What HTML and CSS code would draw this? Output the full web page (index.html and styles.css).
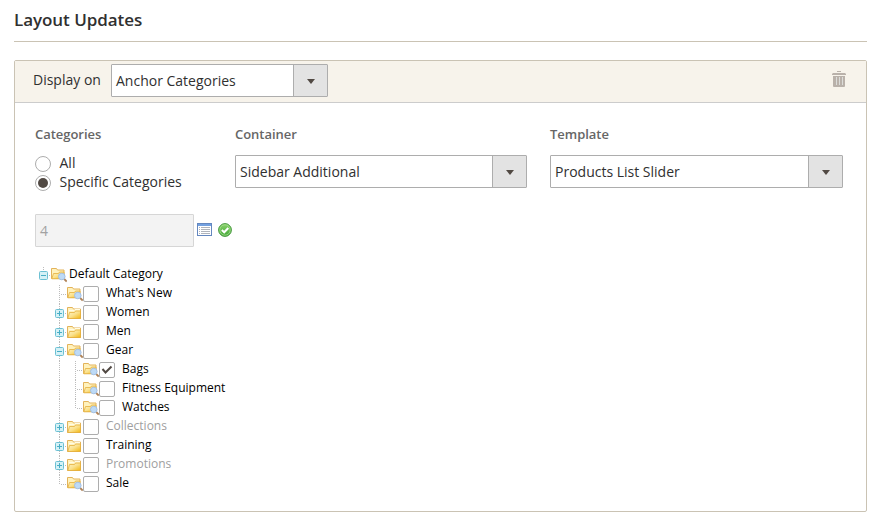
FILE: index.html
```
<!DOCTYPE html>
<html lang="en">
<head>
<meta charset="utf-8">
<title>Layout Updates</title>
<link rel="stylesheet" href="styles.css">
</head>
<body>
<svg class="defs" width="0" height="0" aria-hidden="true">
  <defs>
    <linearGradient id="gold" x1="0" y1="0" x2="1" y2="1"><stop offset="0" stop-color="#fff6c8"/><stop offset=".5" stop-color="#fae18d"/><stop offset="1" stop-color="#f2b60f"/></linearGradient>
    <linearGradient id="green" x1="0" y1="0" x2="0" y2="1"><stop offset="0" stop-color="#8bd36c"/><stop offset="1" stop-color="#3fa535"/></linearGradient>
    <symbol id="folder" viewBox="0 0 16 19">
      <path d="M.5 14.500V3.500h5l1 1.500h7v9.500z" fill="#fff2bd" stroke="#e3b35a"/>
      <path d="M2 6.500h5l1-1h5" fill="none" stroke="#fffbe5"/>
      <path d="M.8 14.500 2.500 8.500h5l1-1.500h5v7.500z" fill="url(#gold)" stroke="#e5ae3c" stroke-width=".8"/>
    </symbol>
    <symbol id="search-folder" viewBox="0 0 16 19">
      <path d="M.5 12.500V2.500h5l1 1.500h6.500v8.500z" fill="#fff2bd" stroke="#e3b35a"/>
      <path d="M.8 12.800 2.500 7.500h5l1-1.500h4.500v6.800z" fill="url(#gold)" stroke="#e5ae3c" stroke-width=".8"/>
      <path d="m13.200 13 2.500 2.500" stroke="#b08358" stroke-width="1.800"/>
      <circle cx="10.800" cy="10.500" r="3.300" fill="#bddaf6" stroke="#a3bfe2"/>
    </symbol>
    <symbol id="plus" viewBox="0 0 16 19">
      <path d="M8.500 0v19M14 9.500h2" fill="none" stroke="#bcbcbc" stroke-dasharray="1 1"/>
      <rect x="4.500" y="5.500" width="8" height="8" rx="1" fill="#d5f1f6" stroke="#6cc0d3"/>
      <path d="M6 9.500h5M8.500 7v5" stroke="#48aec6"/>
    </symbol>
    <symbol id="minus" viewBox="0 0 16 19">
      <path d="M8.500 0v19M14 9.500h2" fill="none" stroke="#bcbcbc" stroke-dasharray="1 1"/>
      <rect x="4.500" y="5.500" width="8" height="8" rx="1" fill="#d5f1f6" stroke="#6cc0d3"/>
      <path d="M6 9.500h5" stroke="#48aec6"/>
    </symbol>
    <symbol id="root" viewBox="0 0 16 19">
      <rect x="4.500" y="5.500" width="8" height="8" rx="1" fill="#d5f1f6" stroke="#6cc0d3"/>
      <path d="M6 9.500h5" stroke="#48aec6"/>
      <path d="M8.500 1v4M14 9.500h2" stroke="#bcbcbc" stroke-dasharray="1 1"/>
    </symbol>
    <symbol id="line" viewBox="0 0 16 19"><path d="M8.500 0v19" stroke="#bcbcbc" stroke-dasharray="1 1"/></symbol>
    <symbol id="tee" viewBox="0 0 16 19"><path d="M8.500 0v19M10 9.500h6" stroke="#bcbcbc" stroke-dasharray="1 1"/></symbol>
    <symbol id="elbow" viewBox="0 0 16 19"><path d="M8.500 0v10M10 9.500h6" stroke="#bcbcbc" stroke-dasharray="1 1"/></symbol>
  </defs>
</svg>
<h2 class="title">Layout Updates</h2>
<section class="panel">
  <header class="panel-head">
    <span class="display-label">Display on</span>
    <div class="select select-page"><span>Anchor Categories</span><i></i></div>
    <svg class="trash" width="14" height="17" viewBox="0 0 14 17"><path d="M5 0h4v1H5zM1 2h12l1 1v1H0V3zM1 5h12v10q0 1-1 1H2q-1 0-1-1z" fill="#b9b1aa"/><path d="M4.500 6v8M7.500 6v8M10.500 6v8" stroke="#dcdcd9"/></svg>
  </header>
  <div class="panel-body">
    <div class="fields">
      <div class="field">
        <h3>Categories</h3>
        <label class="choice"><span class="radio"></span>All</label>
        <label class="choice"><span class="radio on"></span>Specific Categories</label>
      </div>
      <div class="field"><h3>Container</h3><div class="select select-container"><span>Sidebar Additional</span><i></i></div></div>
      <div class="field"><h3>Template</h3><div class="select select-template"><span>Products List Slider</span><i></i></div></div>
    </div>
    <div class="chooser">
      <div class="ids">4</div>
      <svg class="list-icon" width="15" height="13" viewBox="0 0 15 13"><rect x=".5" y=".5" width="14" height="12" fill="#fff" stroke="#6487bf"/><path d="M1 1h13v2H1z" fill="#73a1e0"/><path d="M2 4.500h1m1 0h9M2 6.500h1m1 0h9M2 8.500h1m1 0h9M2 10.500h1m1 0h9" stroke="#b0b4bb"/></svg>
      <svg class="ok-icon" width="14" height="14" viewBox="0 0 14 14"><circle cx="7" cy="7" r="6.400" fill="url(#green)" stroke="#4b9a43"/><circle cx="7" cy="7" r="5.200" fill="none" stroke="#a3dd8d" stroke-width=".8"/><path d="m3.800 7 2.400 2.300L10.300 5" fill="none" stroke="#fff" stroke-width="2"/></svg>
    </div>
    <div class="tree">
      <div class="row"><svg><use href="#root"/></svg><svg><use href="#search-folder"/></svg><span class="root-name">Default Category</span></div>
      <div class="row"><svg></svg><svg><use href="#tee"/></svg><svg><use href="#search-folder"/></svg><b class="check"></b><span>What's New</span></div>
      <div class="row"><svg></svg><svg><use href="#plus"/></svg><svg><use href="#folder"/></svg><b class="check"></b><span>Women</span></div>
      <div class="row"><svg></svg><svg><use href="#plus"/></svg><svg><use href="#folder"/></svg><b class="check"></b><span>Men</span></div>
      <div class="row"><svg></svg><svg><use href="#minus"/></svg><svg><use href="#search-folder"/></svg><b class="check"></b><span>Gear</span></div>
      <div class="row"><svg></svg><svg><use href="#line"/></svg><svg><use href="#tee"/></svg><svg><use href="#search-folder"/></svg><b class="check"><svg class="tick" viewBox="0 0 14 14"><path d="m2.500 6 3 3.500 6-6" fill="none" stroke="#514943" stroke-width="2"/></svg></b><span>Bags</span></div>
      <div class="row"><svg></svg><svg><use href="#line"/></svg><svg><use href="#tee"/></svg><svg><use href="#search-folder"/></svg><b class="check"></b><span>Fitness Equipment</span></div>
      <div class="row"><svg></svg><svg><use href="#line"/></svg><svg><use href="#elbow"/></svg><svg><use href="#search-folder"/></svg><b class="check"></b><span>Watches</span></div>
      <div class="row off"><svg></svg><svg><use href="#plus"/></svg><svg><use href="#folder"/></svg><b class="check"></b><span>Collections</span></div>
      <div class="row"><svg></svg><svg><use href="#plus"/></svg><svg><use href="#folder"/></svg><b class="check"></b><span>Training</span></div>
      <div class="row off"><svg></svg><svg><use href="#plus"/></svg><svg><use href="#folder"/></svg><b class="check"></b><span>Promotions</span></div>
      <div class="row"><svg></svg><svg><use href="#elbow"/></svg><svg><use href="#search-folder"/></svg><b class="check"></b><span>Sale</span></div>
    </div>
  </div>
</section>
</body>
</html>
```
FILE: styles.css
```
* { box-sizing: border-box; }
body { margin: 0; padding: 0 14px; background: #fff; color: #303030; font: 14px/19px "Open Sans", sans-serif; height: 526px; overflow: hidden; }
.defs { position: absolute; }
.title { margin: 0 0 18px; height: 42px; padding-top: 8px; border-bottom: 1px solid #cac3b4; font-size: 17px; line-height: 24px; font-weight: 600; letter-spacing: -0.05px; }
.panel { height: 452px; border: 1px solid #cac3b4; border-radius: 2px; }
.panel-head { display: flex; align-items: center; height: 42px; padding: 0 20px 2px 18px; background: #f7f3eb; border-bottom: 1px solid #ccc; }
.display-label { width: 78px; margin-bottom: 2px; }
.trash { margin: 0 0 3px auto; }
.select { display: flex; align-items: center; justify-content: space-between; height: 33px; padding-left: 4px; background: #fff; border: 1px solid #adadad; border-radius: 1px; white-space: nowrap; }
.select i { display: flex; align-items: center; justify-content: center; width: 34px; height: 31px; background: #e3e3e3; border-left: 1px solid #adadad; }
.select i::after { content: ""; border: 4px solid transparent; border-top: 5px solid #514943; border-bottom: 0; margin-top: 2px; }
.select-page { width: 217px; }
.select-container { width: 292px; }
.select-template { width: 293px; }
.panel-body { padding: 22px 20px 0; }
.fields { display: grid; grid-template-columns: 200px 315px 293px; height: 89px; }
h3 { margin: 0 0 11px; color: #666; font-size: 13px; line-height: 19px; font-weight: 600; letter-spacing: -0.03px; }
.choice { display: flex; align-items: center; height: 19px; }
.field .choice:nth-of-type(1) { margin-top: -2px; }
.radio { display: flex; align-items: center; justify-content: center; width: 16px; height: 16px; margin: 2px 8.500px 0 0; border: 1px solid #adadad; border-radius: 50%; }
.radio.on::after { content: ""; width: 10px; height: 10px; border-radius: 50%; background: #514943; }
.chooser { display: flex; align-items: center; height: 33px; }
.ids { width: 159px; height: 33px; padding: 6px 4px; background: #f3f3f3; border: 1px solid #d6d6d6; border-radius: 1px; color: #a2a2a2; }
.list-icon { margin: 0 6px 2px 3px; }
.ok-icon { margin-bottom: 2px; }
.tree { padding-top: 19px; font-size: 12px; color: #000; }
.row { display: flex; height: 19px; white-space: nowrap; }
.row > svg { width: 16px; height: 19px; flex: none; }
.row > span { margin: -2px 0 0 7px; }
.row > .root-name { margin-left: 2px; }
.off > span { color: #a0a0a0; }
.check { width: 16px; height: 16px; margin-top: 1px; background: #fff; border: 1px solid #adadad; border-radius: 2px; }
.tick { display: block; width: 14px; height: 14px; }
```
